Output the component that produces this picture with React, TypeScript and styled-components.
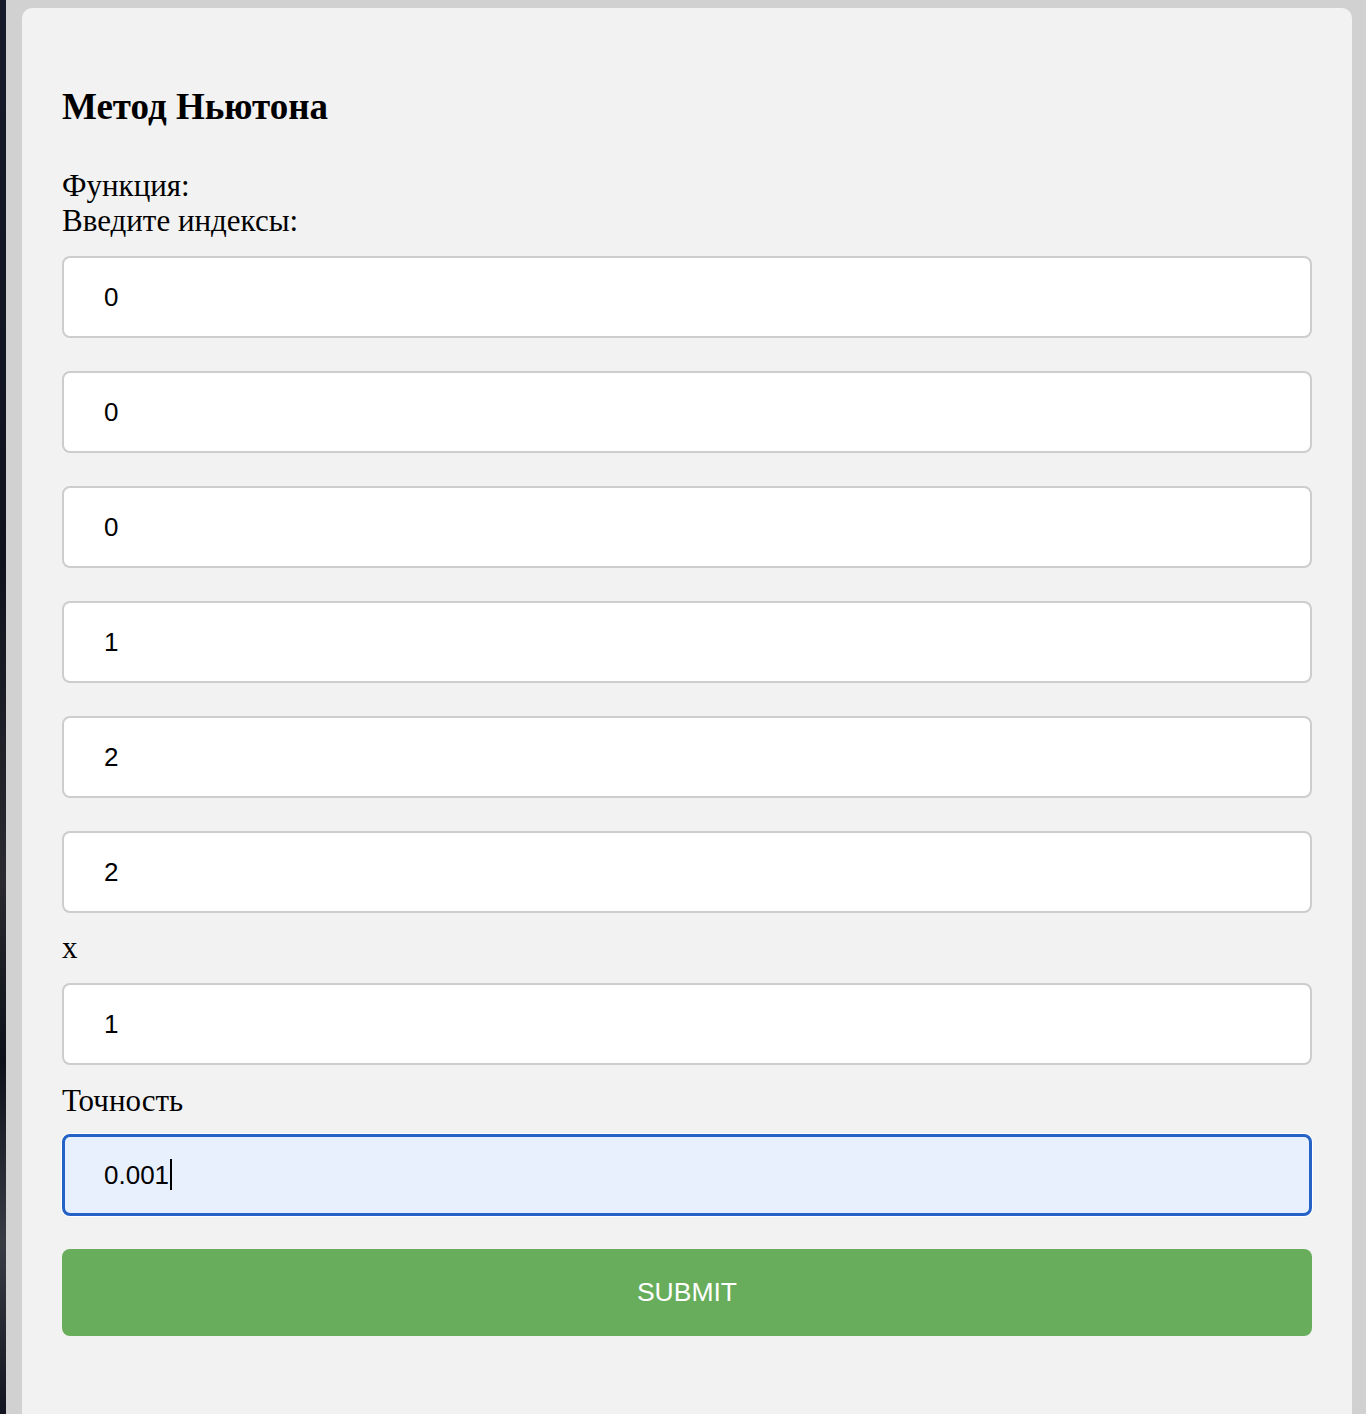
import React, { useState } from "react";
import styled, { createGlobalStyle } from "styled-components";

const GlobalStyle = createGlobalStyle`
  html, body {
    margin: 0;
    padding: 0;
    background: #d1d1d1;
  }
  * {
    box-sizing: border-box;
  }
`;

const initialIndexes = ["0", "0", "0", "1", "2", "2"];

export default function App() {
  const [indexes, setIndexes] = useState<string[]>(initialIndexes);
  const [x, setX] = useState("1");
  const [precision, setPrecision] = useState("0.001");

  const updateIndex = (i: number, value: string) => {
    setIndexes((prev) => prev.map((v, idx) => (idx === i ? value : v)));
  };

  return (
    <Page>
      <GlobalStyle />
      <Backdrop />
      <Stage>
        <Card>
          <Title>Метод Ньютона</Title>
          <Form onSubmit={(e) => e.preventDefault()}>
            <Label>Функция:</Label>
            <Label $bottom={18}>Введите индексы:</Label>
            <IndexList>
              {indexes.map((value, i) => (
                <Input
                  key={i}
                  value={value}
                  onChange={(e) => updateIndex(i, e.target.value)}
                />
              ))}
            </IndexList>
            <Label $top={17} $bottom={18}>
              x
            </Label>
            <Input value={x} onChange={(e) => setX(e.target.value)} />
            <Label $top={18} $bottom={16}>
              Точность
            </Label>
            <FieldWrap>
              <Input
                $active
                value={precision}
                onChange={(e) => setPrecision(e.target.value)}
              />
              {/* fake caret, the real one blinks */}
              <Caret />
            </FieldWrap>
            <SubmitButton type="submit">SUBMIT</SubmitButton>
          </Form>
        </Card>
      </Stage>
    </Page>
  );
}

const Page = styled.div`
  display: flex;
  height: 1414px;
  overflow: hidden;
`;

const Backdrop = styled.div`
  width: 6px;
  flex-shrink: 0;
  background: linear-gradient(
    180deg,
    #161a2a 0%,
    #10131e 40%,
    #2a2a30 62%,
    #0e111a 75%,
    #3a3c44 88%,
    #12151f 100%
  );
`;

const Stage = styled.div`
  flex: 1;
  display: flex;
  padding: 8px 14px 0 16px;
  background: #d1d1d1;
`;

const Card = styled.div`
  flex: 1;
  background: #f2f2f2;
  border-radius: 10px 10px 0 0;
  padding: 78px 40px 0 40px;
`;

const Title = styled.h1`
  margin: 0 0 40px 0;
  font-family: "Liberation Serif", "Times New Roman", serif;
  font-weight: 700;
  font-size: 37px;
  line-height: 42px;
  color: #000;
`;

const Form = styled.form`
  display: flex;
  flex-direction: column;
`;

const Label = styled.label<{ $top?: number; $bottom?: number }>`
  display: block;
  margin-top: ${(p) => p.$top ?? 0}px;
  margin-bottom: ${(p) => p.$bottom ?? 0}px;
  font-family: "Liberation Serif", "Times New Roman", serif;
  font-size: 31px;
  line-height: 35px;
  color: #000;
`;

const IndexList = styled.div`
  display: flex;
  flex-direction: column;
  gap: 33px;
`;

const Input = styled.input<{ $active?: boolean }>`
  display: block;
  width: 100%;
  height: 82px;
  margin: 0;
  padding: 0 0 0 ${(p) => (p.$active ? 39 : 40)}px;
  font-family: "Liberation Sans", Arial, sans-serif;
  font-size: 26px;
  color: #000;
  background: ${(p) => (p.$active ? "#e8f0fe" : "#fff")};
  border: ${(p) => (p.$active ? "3px solid #2462c8" : "2px solid #cdcdcd")};
  border-radius: 8px;
  box-shadow: ${(p) => (p.$active ? "0 0 0 1px #fff" : "none")};
  outline: none;
  caret-color: transparent;
`;

const FieldWrap = styled.div`
  position: relative;
`;

const Caret = styled.span`
  position: absolute;
  left: 108px;
  top: 25px;
  width: 2px;
  height: 31px;
  background: #000;
`;

const SubmitButton = styled.button`
  margin-top: 33px;
  height: 87px;
  width: 100%;
  border: none;
  border-radius: 8px;
  background: #67ad5b;
  color: #fff;
  font-family: "Liberation Sans", Arial, sans-serif;
  font-size: 26.5px;
  cursor: pointer;
`;
